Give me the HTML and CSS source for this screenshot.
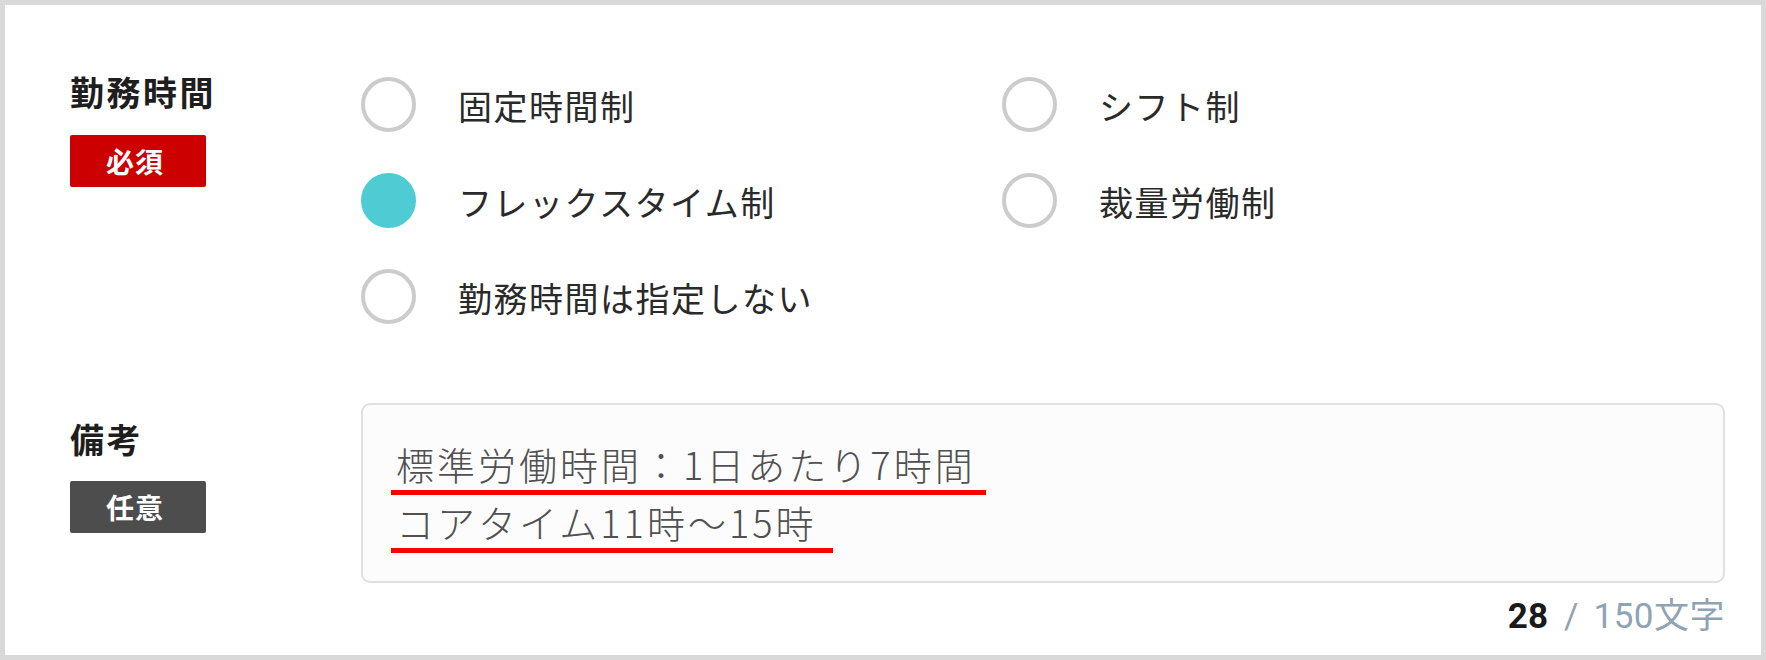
FILE: index.html
```html
<!DOCTYPE html>
<html lang="ja">
<head>
<meta charset="utf-8">
<title>勤務時間</title>
<link rel="stylesheet" href="styles.css">
</head>
<body>
<div class="frame">
  <section class="field field-time">
    <div class="label-col">
      <div class="label">勤務時間</div>
      <span class="badge badge-required">必須</span>
    </div>
    <div class="radio-grid">
      <label class="option"><span class="radio"></span><span class="option-text">固定時間制</span></label>
      <label class="option"><span class="radio"></span><span class="option-text">シフト制</span></label>
      <label class="option"><span class="radio checked"></span><span class="option-text">フレックスタイム制</span></label>
      <label class="option"><span class="radio"></span><span class="option-text">裁量労働制</span></label>
      <label class="option"><span class="radio"></span><span class="option-text">勤務時間は指定しない</span></label>
    </div>
  </section>
  <section class="field field-note">
    <div class="label-col label-col-note">
      <div class="label">備考</div>
      <span class="badge badge-optional">任意</span>
    </div>
    <div class="note-col">
      <div class="textarea">
        <span class="line mark mark-1">標準労働時間：1日あたり7時間</span>
        <span class="line mark mark-2">コアタイム11時～15時</span>
      </div>
      <div class="counter"><span class="count">28</span><span class="sep">/</span><span class="max">150文字</span></div>
    </div>
  </section>
</div>
</body>
</html>
```

FILE: styles.css
```css
* { box-sizing: border-box; }
html, body { margin: 0; padding: 0; background: #fff; }
body {
  font-family: "Noto Sans CJK JP", "Noto Sans", sans-serif;
  color: #222;
}
.frame {
  width: 1766px;
  height: 660px;
  border: 5px solid #d9d9d9;
  padding: 0 36px 0 65px;
}
.field {
  display: grid;
  grid-template-columns: 291px 1fr;
}
.field-time { padding-top: 51px; }
.label-col { display: flex; flex-direction: column; align-items: flex-start; }
.label-col:first-child { padding-top: 16px; }
.label {
  font-size: 34px;
  font-weight: 700;
  line-height: 40px;
  letter-spacing: 2.5px;
  color: #1e1e1e;
}
.badge {
  margin-top: 23px;
  width: 136px;
  height: 52px;
  border-radius: 2px;
  color: #fff;
  font-size: 28px;
  font-weight: 700;
  letter-spacing: 1px;
  display: flex;
  align-items: center;
  justify-content: center;
  padding-right: 6px;
}
.badge-required { background: #cc0000; }
.badge-optional { background: #4d4d4d; }
.radio-grid {
  display: grid;
  grid-template-columns: 641px 1fr;
  grid-auto-rows: 96px;
}
.option {
  display: flex;
  align-items: center;
  gap: 42px;
}
.radio {
  width: 55px;
  height: 55px;
  border-radius: 50%;
  border: 4px solid #cccccc;
  flex: none;
}
.radio.checked { background: #4ecbd3; border-color: #4ecbd3; }
.option-text {
  font-size: 34px;
  font-weight: 400;
  line-height: 40px;
  letter-spacing: 1.5px;
  color: #2a2a2a;
  padding-top: 3px;
}
.field-note { margin-top: 59px; }
.label-col-note { padding-top: 12px; }
.label-col-note .badge { margin-top: 22px; }
.note-col { display: flex; flex-direction: column; }
.textarea {
  height: 180px;
  border: 2px solid #e0e0e0;
  border-radius: 9px;
  background: #fcfcfc;
  padding: 32px 0 0 28px;
  display: flex;
  flex-direction: column;
  align-items: flex-start;
}
.line {
  font-size: 38px;
  font-weight: 300;
  line-height: 53px;
  height: 58px;
  letter-spacing: 3px;
  color: #505050;
  padding: 0 10px 0 5px;
  border-bottom: 5px solid #ff0000;
  white-space: nowrap;
}
.mark-2 { padding-right: 16px; }
.counter {
  margin-top: 12px;
  align-self: flex-end;
  font-family: Roboto, "Noto Sans CJK JP", sans-serif;
  font-size: 35px;
  line-height: 43px;
  color: #8fa3b2;
  display: flex;
}
.count { color: #1a1a1a; font-weight: 700; }
.sep { margin: 0 15px 0 16px; }
.max { letter-spacing: 0.5px; }
```
